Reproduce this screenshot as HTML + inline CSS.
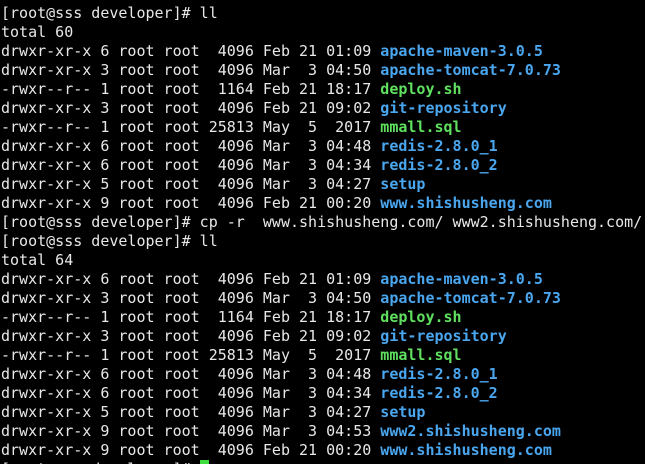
<!DOCTYPE html>
<html><head><meta charset="utf-8"><style>
html,body{margin:0;padding:0;background:#000;width:645px;height:464px;overflow:hidden}
pre{margin:0;padding:4px 0 0 1px;font-family:"DejaVu Sans Mono","Liberation Mono",monospace;font-size:15px;line-height:19px;color:#e8e8e8;letter-spacing:0}
.b{color:#4aa6ee;font-weight:bold}
.g{color:#5fe05f;font-weight:bold}
.c{background:#3fdc3f;color:#3fdc3f}
</style></head><body><pre>[root@sss developer]# ll
total 60
drwxr-xr-x 6 root root  4096 Feb 21 01:09 <span class="b">apache-maven-3.0.5</span>
drwxr-xr-x 3 root root  4096 Mar  3 04:50 <span class="b">apache-tomcat-7.0.73</span>
-rwxr--r-- 1 root root  1164 Feb 21 18:17 <span class="g">deploy.sh</span>
drwxr-xr-x 3 root root  4096 Feb 21 09:02 <span class="b">git-repository</span>
-rwxr--r-- 1 root root 25813 May  5  2017 <span class="g">mmall.sql</span>
drwxr-xr-x 6 root root  4096 Mar  3 04:48 <span class="b">redis-2.8.0_1</span>
drwxr-xr-x 6 root root  4096 Mar  3 04:34 <span class="b">redis-2.8.0_2</span>
drwxr-xr-x 5 root root  4096 Mar  3 04:27 <span class="b">setup</span>
drwxr-xr-x 9 root root  4096 Feb 21 00:20 <span class="b">www.shishusheng.com</span>
[root@sss developer]# cp -r  www.shishusheng.com/ www2.shishusheng.com/
[root@sss developer]# ll
total 64
drwxr-xr-x 6 root root  4096 Feb 21 01:09 <span class="b">apache-maven-3.0.5</span>
drwxr-xr-x 3 root root  4096 Mar  3 04:50 <span class="b">apache-tomcat-7.0.73</span>
-rwxr--r-- 1 root root  1164 Feb 21 18:17 <span class="g">deploy.sh</span>
drwxr-xr-x 3 root root  4096 Feb 21 09:02 <span class="b">git-repository</span>
-rwxr--r-- 1 root root 25813 May  5  2017 <span class="g">mmall.sql</span>
drwxr-xr-x 6 root root  4096 Mar  3 04:48 <span class="b">redis-2.8.0_1</span>
drwxr-xr-x 6 root root  4096 Mar  3 04:34 <span class="b">redis-2.8.0_2</span>
drwxr-xr-x 5 root root  4096 Mar  3 04:27 <span class="b">setup</span>
drwxr-xr-x 9 root root  4096 Mar  3 04:53 <span class="b">www2.shishusheng.com</span>
drwxr-xr-x 9 root root  4096 Feb 21 00:20 <span class="b">www.shishusheng.com</span>
[root@sss developer]# <span class="c">_</span></pre></body></html>
